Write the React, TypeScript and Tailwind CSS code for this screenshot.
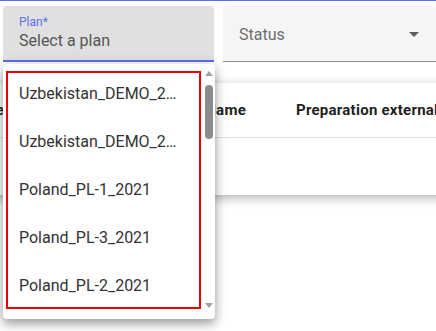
import { useState } from 'react';

const plans = [
  'Uzbekistan_DEMO_2020',
  'Uzbekistan_DEMO_2021',
  'Poland_PL-1_2021',
  'Poland_PL-3_2021',
  'Poland_PL-2_2021',
];

export default function App() {
  const [selected, setSelected] = useState<string | null>(null);

  return (
    <div
      className="relative w-[436px] h-[331px] overflow-hidden bg-white border-t border-[#5b6ff0]"
      style={{ fontFamily: 'Roboto, "Liberation Sans", sans-serif' }}
    >
      <div className="flex gap-[9px] pl-[3px] pt-[5px]">
        <div className="w-[211px] h-[56px] bg-[#e0e0e0] rounded-t-[4px] border-b-2 border-[#5b6ff0] px-4 pt-[9px]">
          <div className="text-[12px] leading-[14px] text-[#5b6ff0]">Plan*</div>
          <div className="text-[16px] leading-[24px] text-[#555555]">
            {selected ?? 'Select a plan'}
          </div>
        </div>
        <div className="flex-1 h-[56px] bg-[#f5f5f5] rounded-t-[4px] border-b border-[#8a8a8a] flex items-center justify-between pl-4 pr-[17px] pt-[2px]">
          <span className="text-[16px] text-[#6e6e6e]">Status</span>
          <span className="w-0 h-0 border-l-[5px] border-r-[5px] border-t-[5px] border-l-transparent border-r-transparent border-t-[#5f5f5f]" />
        </div>
      </div>

      <div className="mt-[21px] -ml-[100px] w-[700px] bg-white shadow-[0_3px_10px_rgba(0,0,0,0.3)]">
        <div className="flex h-[55px] items-center border-b border-[#e0e0e0] text-[15px] tracking-[0.25px] font-bold text-[#1f1f1f]">
          <span className="w-[104px] text-right">Type</span>
          <span className="w-[242px] text-right">Name</span>
          <span className="ml-[50px] whitespace-nowrap">Preparation external code</span>
        </div>
        <div className="h-[57px]" />
      </div>

      <div className="absolute left-[3px] top-[63px] w-[212px] h-[255px] bg-white rounded-[4px] shadow-[0_5px_10px_rgba(0,0,0,0.3),0_2px_16px_rgba(0,0,0,0.15)] flex">
        <div className="pl-[3px] pt-[7px]">
          <div className="w-[195px] h-[238px] border-2 border-[#ee0000] overflow-hidden">
            <ul className="-mt-[3px]">
              {plans.map((p) => (
                <li
                  key={p}
                  onClick={() => setSelected(p)}
                  className="h-[48px] flex items-center pl-[11px] pr-[20px] text-[16px] text-[#333333] cursor-pointer"
                >
                  <span className="truncate">{p}</span>
                </li>
              ))}
            </ul>
          </div>
        </div>
        <div className="ml-[1px] w-[13px] pt-[7px] pb-[11px] flex flex-col items-center">
          <span className="w-0 h-0 border-l-[4px] border-r-[4px] border-b-[5px] border-l-transparent border-r-transparent border-b-[#a3a3a3]" />
          <span className="mt-[9px] w-[8px] h-[54px] rounded-full bg-[#8c8c8c]" />
          <span className="mt-auto w-0 h-0 border-l-[4px] border-r-[4px] border-t-[5px] border-l-transparent border-r-transparent border-t-[#a3a3a3]" />
        </div>
      </div>
    </div>
  );
}
